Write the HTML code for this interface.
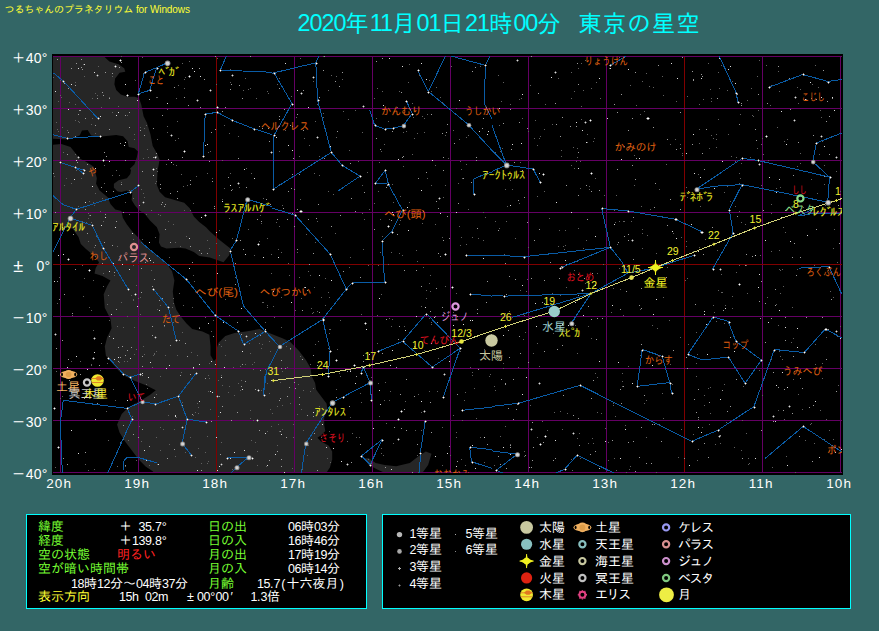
<!DOCTYPE html>
<html lang="ja"><head><meta charset="utf-8"><title>東京の星空</title>
<style>
html,body{margin:0;padding:0}
body{width:879px;height:631px;background:#336666;position:relative;overflow:hidden;font-family:"Liberation Sans","IPAGothic",sans-serif}
.hd{position:absolute;left:4.5px;top:4px;font-size:10px;line-height:12px;color:#ffff33;white-space:nowrap;letter-spacing:-0.1px}
.tt{position:absolute;left:297.5px;top:9.5px;font-size:23.5px;line-height:28px;color:#0ff;white-space:nowrap;letter-spacing:1px}
.tt b{font-weight:normal;font-size:23.4px;letter-spacing:-1.05px;position:relative;top:-1px}
.ax{position:absolute;color:#fff;font-size:14px;line-height:16px;white-space:nowrap;letter-spacing:0.2px}
.t b{display:inline-block;width:6.5px;text-align:center;font-weight:normal;font-size:12.5px}
.box{position:absolute;background:#000;border:1px solid #00ffff;box-sizing:border-box}
.t{position:absolute;font-size:13px;line-height:14px;white-space:nowrap;color:#fff}
.k{letter-spacing:-1.4px}.g{color:#77ff33}.y{color:#ffff33}.r{color:#ff2222}
svg{position:absolute;left:0;top:0}
svg text{font-family:"Liberation Sans","IPAGothic",sans-serif}
</style></head><body>
<div class="hd">つるちゃんのプラネタリウム for Windows</div>
<div class="tt"><b>2020</b>年<b>11</b>月<b>01</b>日<b>21</b>時<b>00</b>分<b style="margin-right:5.6px">&nbsp;&nbsp;</b>東京の星空</div>

<div class="ax" style="left:11.4px;top:49.7px;font-size:14px;letter-spacing:0">＋</div>
<div class="ax" style="left:0;top:49.7px;width:47.6px;text-align:right">40°</div>
<div class="ax" style="left:11.4px;top:101.7px;font-size:14px;letter-spacing:0">＋</div>
<div class="ax" style="left:0;top:101.7px;width:47.6px;text-align:right">30°</div>
<div class="ax" style="left:11.4px;top:153.7px;font-size:14px;letter-spacing:0">＋</div>
<div class="ax" style="left:0;top:153.7px;width:47.6px;text-align:right">20°</div>
<div class="ax" style="left:11.4px;top:205.7px;font-size:14px;letter-spacing:0">＋</div>
<div class="ax" style="left:0;top:205.7px;width:47.6px;text-align:right">10°</div>
<div class="ax" style="left:13.2px;top:257.8px;font-size:18px;letter-spacing:0">±</div>
<div class="ax" style="left:0;top:257.7px;width:50.2px;text-align:right">0°</div>
<div class="ax" style="left:11.4px;top:309.7px;font-size:14px;letter-spacing:0">－</div>
<div class="ax" style="left:0;top:309.7px;width:47.6px;text-align:right">10°</div>
<div class="ax" style="left:11.4px;top:361.7px;font-size:14px;letter-spacing:0">－</div>
<div class="ax" style="left:0;top:361.7px;width:47.6px;text-align:right">20°</div>
<div class="ax" style="left:11.4px;top:413.7px;font-size:14px;letter-spacing:0">－</div>
<div class="ax" style="left:0;top:413.7px;width:47.6px;text-align:right">30°</div>
<div class="ax" style="left:11.4px;top:465.7px;font-size:14px;letter-spacing:0">－</div>
<div class="ax" style="left:0;top:465.7px;width:47.6px;text-align:right">40°</div>
<div class="ax" style="left:39.2px;top:476.4px;width:40px;text-align:center;font-size:13.5px;letter-spacing:1.2px">20h</div>
<div class="ax" style="left:117.2px;top:476.4px;width:40px;text-align:center;font-size:13.5px;letter-spacing:1.2px">19h</div>
<div class="ax" style="left:195.2px;top:476.4px;width:40px;text-align:center;font-size:13.5px;letter-spacing:1.2px">18h</div>
<div class="ax" style="left:273.2px;top:476.4px;width:40px;text-align:center;font-size:13.5px;letter-spacing:1.2px">17h</div>
<div class="ax" style="left:351.2px;top:476.4px;width:40px;text-align:center;font-size:13.5px;letter-spacing:1.2px">16h</div>
<div class="ax" style="left:429.2px;top:476.4px;width:40px;text-align:center;font-size:13.5px;letter-spacing:1.2px">15h</div>
<div class="ax" style="left:507.2px;top:476.4px;width:40px;text-align:center;font-size:13.5px;letter-spacing:1.2px">14h</div>
<div class="ax" style="left:585.2px;top:476.4px;width:40px;text-align:center;font-size:13.5px;letter-spacing:1.2px">13h</div>
<div class="ax" style="left:663.2px;top:476.4px;width:40px;text-align:center;font-size:13.5px;letter-spacing:1.2px">12h</div>
<div class="ax" style="left:741.2px;top:476.4px;width:40px;text-align:center;font-size:13.5px;letter-spacing:1.2px">11h</div>
<div class="ax" style="left:819.2px;top:476.4px;width:40px;text-align:center;font-size:13.5px;letter-spacing:1.2px">10h</div>
<svg width="879" height="631" viewBox="0 0 879 631">
<defs><clipPath id="cp"><rect x="53" y="56" width="789" height="417"/></clipPath></defs>
<rect x="52" y="54" width="791" height="421" fill="#000"/>
<g clip-path="url(#cp)">
<path d="M52,54 L101.4,54 L109.4,61.4 L118.5,64.2 L124.2,68.3 L125.3,71.7 L119.6,72.8 L115.1,78.5 L114.4,84.2 L116.2,90 L120.8,94.5 L127.6,96.8 L134.5,96.8 L139,98 L141.3,104.8 L143.6,116.2 L147,123 L150.5,134.5 L152.7,145.9 L157.3,153.9 L159.6,159.6 L158.4,166.5 L157.6,170 L156.9,185 L159.6,191.8 L165.1,197.3 L174.6,200 L184.2,202.8 L189.7,208.2 L193.8,216.4 L199.2,221.9 L206,227.3 L210,231.4 L219,239.4 L230.4,248.5 L229.2,255.3 L223.5,262.2 L209.8,257.6 L199.2,256 L193.8,251.9 L185.6,248.5 L178.7,247.8 L166.5,248.5 L161,246.5 L158.9,242.4 L159.6,234.2 L156.9,227.3 L150,220.5 L144.6,213.7 L139.1,210.3 L135,205.5 L131.6,200 L132.3,193.2 L126.9,190.5 L121.4,192.1 L117.3,191.2 L113.9,187.7 L113.9,183.7 L118.7,180.2 L126.9,178.2 L130.3,174.1 L131,170 L129.9,168.7 L134.5,164.2 L136.8,157.3 L137.9,151.6 L134.5,148.2 L128.8,147 L127.6,141.3 L123.1,136.3 L116.2,134.9 L99.1,136.8 L91.1,135.6 L87.7,129.9 L82,130.4 L79.7,135.6 L68.3,139.5 L52,138.6 L52,144.7 L61.4,144 L70.5,147 L75.1,152.7 L79.7,158.4 L86.5,161.9 L93.4,166.4 L94.8,170 L96.8,178.2 L96.1,183.7 L99.6,190.5 L107.7,197.3 L110.5,204.1 L115.3,209.6 L121.4,211 L122.8,217.8 L126.9,224.6 L132.3,231.4 L137.8,236.9 L145.9,246.2 L157.3,255.3 L166.4,263.3 L172.1,271.3 L174.4,280.5 L172.8,291.4 L174,302.8 L176.3,309.7 L180.8,316.5 L186.5,323.4 L192.2,329.1 L202.5,331.4 L209.4,334.8 L210.5,346.2 L210.5,355.3 L213.9,361 L216.2,358.8 L216.7,348.5 L218.5,342.8 L225.3,335.9 L234.5,333 L245.9,331.4 L259.6,329.1 L271,333.7 L282.4,338.2 L290,341.8 L299.1,351 L305.9,360.1 L310.5,368.1 L311.6,376.1 L315.1,382.9 L316.2,389.8 L323.1,398.9 L326.5,403.5 L327.6,410.3 L324.2,417.2 L324.2,425.2 L325.3,430.9 L320.8,435.5 L317.4,437.7 L320.8,441.2 L328.8,445.7 L332.2,451.4 L332.2,459.4 L329.9,467.4 L324.2,476 L157,476 L152.4,471 L145.6,466.5 L138.7,459.6 L131.9,450.5 L125.1,441.4 L119.4,432.3 L117.1,424.4 L121.7,414.1 L128.5,407.3 L141,400.5 L150.1,394.8 L155.8,390.2 L145.9,385.3 L134.5,380.8 L125.3,376.2 L118.5,370.5 L111.6,362.5 L105.9,355.7 L104.8,346.5 L107.1,337.4 L111.6,328.3 L110.5,319.1 L105.9,310 L104.8,307.9 L103.7,294.2 L107.1,286.2 L110.5,280.5 L102.5,275.9 L94.5,273.6 L95.7,267.9 L99.1,262.2 L93.4,255.3 L85.4,248.5 L80.8,243.9 L78.5,237.1 L72.8,229.1 L60.3,224.5 L52,223.4Z" fill="#262626"/>
<path d="M364.2,458.3 L368.7,465.1 L377.9,469.7 L391.6,476 L420.1,476 L428.1,465.1 L431.5,453.7 L425.8,451.4 L418.9,456 L409.8,462.9 L396.1,466.3 L384.7,465.1 L375.6,462.9 L368.7,458.3Z" fill="#262626"/>
<line x1="60.5" y1="54" x2="60.5" y2="475" stroke="#640064" stroke-width="1"/>
<line x1="138.5" y1="54" x2="138.5" y2="475" stroke="#640064" stroke-width="1"/>
<line x1="216.5" y1="54" x2="216.5" y2="475" stroke="#800000" stroke-width="1"/>
<line x1="294.5" y1="54" x2="294.5" y2="475" stroke="#640064" stroke-width="1"/>
<line x1="372.5" y1="54" x2="372.5" y2="475" stroke="#640064" stroke-width="1"/>
<line x1="450.5" y1="54" x2="450.5" y2="475" stroke="#640064" stroke-width="1"/>
<line x1="528.5" y1="54" x2="528.5" y2="475" stroke="#640064" stroke-width="1"/>
<line x1="606.5" y1="54" x2="606.5" y2="475" stroke="#640064" stroke-width="1"/>
<line x1="684.5" y1="54" x2="684.5" y2="475" stroke="#800000" stroke-width="1"/>
<line x1="762.5" y1="54" x2="762.5" y2="475" stroke="#640064" stroke-width="1"/>
<line x1="840.5" y1="54" x2="840.5" y2="475" stroke="#640064" stroke-width="1"/>
<line x1="52" y1="56.5" x2="844" y2="56.5" stroke="#640064" stroke-width="1"/>
<line x1="52" y1="108.5" x2="844" y2="108.5" stroke="#640064" stroke-width="1"/>
<line x1="52" y1="160.5" x2="844" y2="160.5" stroke="#640064" stroke-width="1"/>
<line x1="52" y1="212.5" x2="844" y2="212.5" stroke="#640064" stroke-width="1"/>
<line x1="52" y1="264.5" x2="844" y2="264.5" stroke="#800000" stroke-width="1"/>
<line x1="52" y1="316.5" x2="844" y2="316.5" stroke="#640064" stroke-width="1"/>
<line x1="52" y1="368.5" x2="844" y2="368.5" stroke="#640064" stroke-width="1"/>
<line x1="52" y1="420.5" x2="844" y2="420.5" stroke="#640064" stroke-width="1"/>
<line x1="52" y1="472.5" x2="844" y2="472.5" stroke="#640064" stroke-width="1"/>
<path d="M649,86h1M279,78h1M626,472h1M630,85h1M597,273h1M136,349h1M559,230h1M127,115h1M221,442h1M329,297h1M644,403h1M172,307h1M193,275h1M478,238h1M207,173h1M57,129h1M749,463h1M456,108h1M248,89h1M157,55h1M265,369h1M552,293h1M609,68h1M711,101h1M281,327h1M157,171h1M711,98h1M450,455h1M235,277h1M139,426h1M663,297h1M592,438h1M240,366h1M336,76h1M506,221h1M577,157h1M318,341h1M740,178h1M218,416h1M620,289h1M392,319h1M331,75h1M144,197h1M757,148h1M319,97h1M323,117h1M619,268h1M185,77h1M509,311h1M71,183h1M408,82h1M693,434h1M443,314h1M301,409h1M88,213h1M138,298h1M58,101h1M144,128h1M95,256h1M652,325h1M786,456h1M386,423h1M794,371h1M84,76h1M72,375h1M323,56h1M591,88h1M129,190h1M718,290h1M100,370h1M189,61h1M350,417h1M140,297h1M268,93h1M589,189h1M168,415h1M468,209h1M253,420h1M119,256h1M102,198h1M730,201h1M325,278h1M135,80h1M175,140h1M565,470h1M393,443h1M337,349h1M75,120h1M779,446h1M307,455h1M521,98h1M181,174h1M301,298h1M82,265h1M75,154h1M743,386h1M736,272h1M483,240h1M352,433h1M251,173h1M355,110h1M110,359h1M134,139h1M435,224h1M133,198h1M442,237h1M94,247h1M117,466h1M818,87h1M321,437h1M310,275h1M663,95h1M718,72h1M151,270h1M293,437h1M319,156h1M458,183h1M722,292h1M94,205h1M663,418h1M388,264h1M560,335h1M254,255h1M59,277h1M426,290h1M682,155h1M795,472h1M429,283h1M56,371h1M236,469h1M505,313h1M804,215h1M108,440h1M802,409h1M681,195h1M313,312h1M659,189h1M466,137h1M323,113h1M456,432h1M803,55h1M350,370h1M75,82h1M650,209h1M669,320h1M53,77h1M216,84h1M680,337h1M680,144h1M542,421h1M500,436h1M92,118h1M820,410h1M140,314h1M319,175h1M762,395h1M368,459h1M167,109h1M198,413h1M826,419h1M88,470h1M822,378h1M342,79h1M381,448h1M84,278h1M833,439h1M580,188h1M272,413h1M160,376h1M491,334h1M698,174h1M587,134h1M527,279h1M157,139h1M803,207h1M461,459h1M700,206h1M811,179h1M640,355h1M710,413h1M238,383h1M770,105h1M462,420h1M240,390h1M520,162h1M681,237h1M185,452h1M718,119h1M55,467h1M303,390h1M631,221h1M267,91h1M156,351h1M292,150h1M614,458h1M740,114h1M381,294h1M705,239h1M591,338h1M261,390h1M173,224h1M703,99h1M793,338h1M103,259h1M59,78h1M539,366h1M156,394h1M195,457h1M780,187h1M88,218h1M484,349h1M728,134h1M157,97h1M208,375h1M177,121h1M313,81h1M201,463h1M713,138h1M292,468h1M613,405h1M600,98h1M460,351h1M424,350h1M558,246h1M340,320h1M262,344h1M187,185h1M293,424h1M715,444h1M658,280h1M180,246h1M686,246h1M510,104h1M400,220h1M279,431h1M783,286h1M224,188h1M269,341h1M259,241h1M349,267h1M708,63h1M498,75h1M254,362h1M109,320h1M433,349h1M585,283h1M381,453h1M163,429h1M578,68h1M282,371h1M158,214h1M83,64h1M71,361h1M297,414h1M412,103h1M179,293h1M468,125h1M285,130h1M459,139h1M630,466h1M308,271h1M164,326h1M696,332h1M155,183h1M93,202h1M657,328h1M806,99h1M518,367h1M448,158h1M614,210h1M279,151h1M414,138h1M623,221h1M673,233h1M746,433h1M814,443h1M837,336h1M339,373h1M564,249h1M642,248h1M315,344h1M687,278h1M419,75h1M210,151h1M129,214h1M574,270h1M576,161h1M619,57h1M153,355h1M213,320h1M154,353h1M249,285h1M503,82h1M311,308h1M350,257h1M719,88h1M212,178h1M329,333h1M216,243h1M776,188h1M821,117h1M329,431h1M726,422h1M381,151h1M250,88h1M348,119h1M417,261h1M696,376h1M748,464h1M255,442h1M371,377h1M286,346h1M642,233h1M379,162h1M456,437h1M768,160h1M183,305h1M772,467h1M776,304h1M300,58h1M709,234h1M777,127h1M837,262h1M771,213h1M385,282h1M225,340h1M713,305h1M146,384h1M681,429h1M617,244h1M112,76h1M104,165h1M198,407h1M194,281h1M93,280h1M678,457h1M780,270h1M62,396h1M634,155h1M582,290h1M687,96h1M745,224h1M637,270h1M404,326h1M246,168h1M433,339h1M595,178h1M279,184h1M739,183h1M249,343h1M101,245h1M771,359h1M176,417h1M259,343h1M64,185h1M615,222h1M250,410h1M403,132h1M85,464h1M540,136h1M287,367h1M422,223h1M699,129h1M321,237h1M195,412h1M257,451h1M197,403h1M834,229h1M383,455h1M302,469h1M60,398h1M225,355h1M134,354h1M647,235h1M549,218h1M221,375h1M642,229h1M330,329h1M377,343h1M419,471h1M686,187h1M615,416h1M588,326h1M424,132h1M178,85h1M239,187h1M464,400h1M437,391h1M840,191h1M57,303h1M270,351h1M267,431h1M502,148h1M167,132h1M362,132h1M822,141h1M459,226h1M91,124h1M290,349h1M160,427h1M377,88h1M552,124h1M282,405h1M282,429h1M328,90h1M757,76h1M485,217h1M299,156h1M624,221h1M537,437h1M403,358h1M697,460h1M382,91h1M321,297h1M120,442h1M593,141h1M229,133h1M708,388h1M418,394h1M258,55h1M235,211h1M501,101h1M143,158h1M494,386h1M297,252h1M261,223h1M526,291h1M537,145h1M739,173h1M157,309h1M824,165h1M750,157h1M247,320h1M604,195h1M445,185h1M442,465h1M725,305h1M732,81h1M126,471h1M791,342h1M819,205h1M581,106h1M727,186h1M379,416h1M317,221h1M86,222h1M528,131h1M413,117h1M724,323h1M409,64h1M148,157h1M836,171h1M208,391h1M798,394h1M329,329h1M304,138h1M315,242h1M176,98h1M127,361h1M761,144h1M830,291h1M378,265h1M207,463h1M277,406h1M121,56h1M822,363h1M147,388h1M741,450h1M359,437h1M456,293h1M143,193h1M176,165h1M207,240h1M571,459h1M219,255h1M805,440h1M824,184h1M437,322h1M752,115h1M340,376h1M380,252h1M739,265h1M424,422h1M597,412h1M222,385h1M793,379h1M199,327h1M751,88h1M466,164h1M748,458h1M717,250h1M670,364h1M133,239h1M93,330h1M282,205h1M391,326h1M230,69h1M436,87h1M144,354h1M452,317h1M390,391h1M248,229h1M222,199h1M581,63h1M356,437h1M810,424h1M709,424h1M310,391h1M250,418h1M166,164h1M261,348h1M416,250h1M704,405h1M108,295h1M257,465h1M622,381h1M95,133h1M594,138h1M575,457h1M622,386h1M132,416h1M572,470h1M362,213h1M60,95h1M666,164h1M470,367h1M829,430h1M494,465h1M82,221h1M824,439h1M74,229h1M418,472h1M134,327h1M89,215h1M596,82h1M347,441h1M233,367h1M267,383h1M724,384h1M124,361h1M800,89h1M792,307h1M798,103h1M63,152h1M545,104h1M313,388h1M186,236h1M277,445h1M427,178h1M60,80h1M83,296h1M523,339h1M173,303h1M230,173h1M574,168h1M587,142h1M156,97h1M524,456h1M263,198h1M64,376h1M429,391h1M136,285h1M89,201h1M120,260h1M741,163h1M191,352h1M207,436h1M125,202h1M431,322h1M761,185h1M589,186h1M812,84h1M741,222h1M716,147h1M265,332h1M190,437h1M732,308h1M280,382h1M533,353h1M119,362h1M734,447h1M480,437h1M109,97h1M106,411h1M210,409h1M371,463h1M208,152h1M732,296h1M250,353h1M317,311h1M682,153h1M371,394h1M116,170h1M103,221h1M175,456h1M586,240h1M727,90h1M782,269h1M519,99h1M530,405h1M123,439h1M424,118h1M811,423h1M819,154h1M578,228h1M91,222h1M378,191h1M343,111h1M312,313h1M783,227h1M229,218h1M613,288h1M118,106h1M431,91h1M371,465h1M583,90h1M147,149h1M580,458h1M815,364h1M389,318h1M784,419h1M209,378h1M757,187h1M274,317h1M787,139h1M314,173h1M670,144h1M782,359h1M472,237h1M218,380h1M140,127h1M376,118h1M537,196h1M771,251h1M415,430h1M760,255h1M698,419h1M544,280h1M385,382h1M393,202h1M277,84h1M92,98h1M778,410h1M422,116h1M208,461h1M595,373h1M445,135h1M423,267h1M442,427h1M378,383h1M505,426h1M89,307h1M767,297h1M107,363h1M571,72h1M136,460h1M281,297h1M721,292h1M753,116h1M224,125h1M219,230h1M167,126h1M391,252h1M522,118h1M245,364h1M653,87h1M103,273h1M780,356h1M384,400h1M817,193h1M490,374h1M431,185h1M196,176h1M656,253h1M103,286h1M91,364h1M510,180h1M495,221h1M101,107h1M156,156h1M629,469h1M656,472h1M121,302h1M336,137h1M56,122h1M442,102h1M96,236h1M262,302h1M687,197h1M608,247h1M778,71h1M515,238h1M141,441h1M495,390h1M739,211h1M709,148h1M115,400h1M230,82h1M169,444h1M182,402h1M646,400h1M462,178h1M146,214h1M270,409h1M519,203h1M575,325h1M389,400h1M480,66h1M731,156h1M436,472h1M561,334h1M228,392h1M374,203h1M547,430h1M369,209h1M280,398h1M113,389h1M260,215h1M79,122h1M771,204h1M503,363h1M528,247h1M430,291h1M468,135h1M241,296h1M414,347h1M335,233h1M438,358h1M362,185h1M500,151h1M229,315h1M714,312h1M838,385h1M229,386h1M711,135h1M616,470h1M141,189h1M820,110h1M76,170h1M474,388h1M577,438h1M840,326h1M269,393h1M623,315h1M430,275h1M184,79h1M710,89h1M173,322h1M165,355h1M512,189h1M504,254h1M209,363h1M296,117h1M157,464h1M361,314h1M252,364h1M193,203h1M101,343h1M112,112h1M349,150h1M616,195h1M149,465h1M377,315h1M299,277h1M759,370h1M360,393h1M710,387h1M465,392h1M327,458h1M397,107h1M278,249h1M699,247h1M779,269h1M211,331h1M565,245h1M589,283h1M232,469h1M699,143h1M814,265h1M91,365h1M279,226h1M554,412h1M154,354h1M472,372h1M562,429h1M306,234h1M702,427h1M67,130h1M771,85h1M716,139h1M156,181h1M330,462h1M178,138h1M613,403h1M190,210h1M523,314h1M176,165h1M367,172h1M317,104h1M388,121h1M310,364h1M766,65h1M747,293h1M128,440h1M472,375h1M173,164h1M363,249h1M567,413h1M495,152h1M368,265h1M476,418h1M271,273h1M510,444h1M91,310h1M295,310h1M603,264h1M619,221h1M97,95h1M238,136h1M785,232h1M358,161h1M440,97h1M698,449h1M267,305h1M276,222h1M75,104h1M800,153h1M151,210h1M427,114h1M573,147h1M628,147h1M563,246h1M245,78h1M205,317h1M699,104h1M133,300h1M460,161h1M611,312h1M524,451h1M625,425h1M133,265h1M693,251h1M405,401h1M797,87h1M182,63h1M662,393h1M82,265h1M95,193h1M704,395h1M192,307h1M577,261h1M636,105h1M577,148h1M69,102h1M800,163h1M266,466h1M174,429h1M716,321h1M724,192h1M828,270h1M489,376h1M453,130h1M676,101h1M169,257h1M175,242h1M112,175h1M177,355h1M403,166h1M503,368h1M565,230h1M675,139h1M271,426h1M309,145h1M421,412h1M243,90h1M815,344h1M98,66h1M697,354h1M553,333h1M100,211h1M417,455h1M156,437h1M672,384h1M333,194h1M499,228h1M644,111h1M429,318h1M797,269h1M184,210h1M758,110h1M466,244h1M634,185h1M389,219h1M484,462h1M520,290h1M364,219h1M763,154h1M94,469h1M54,176h1M209,248h1M593,443h1M290,403h1M88,241h1M460,245h1M558,78h1M143,346h1M797,166h1M179,315h1M182,332h1M735,161h1M784,141h1M399,224h1M525,332h1M435,165h1M392,184h1M779,250h1M78,206h1M429,80h1M778,325h1M399,91h1M256,98h1M80,361h1M114,275h1M300,356h1M168,221h1M539,138h1M561,150h1M759,473h1M173,298h1M646,73h1M267,238h1M322,158h1M197,355h1M742,420h1M597,377h1M842,465h1M61,97h1M402,255h1M561,156h1M288,263h1M181,372h1M688,344h1M406,131h1M530,85h1M608,460h1M217,58h1M319,406h1M291,96h1M263,302h1M566,287h1M696,363h1M443,197h1M640,114h1M267,307h1M131,295h1M160,450h1M656,270h1M762,138h1M221,346h1M289,275h1M779,91h1M560,411h1M534,138h1M160,305h1M399,253h1M380,219h1M58,131h1M630,279h1M155,237h1M133,299h1M640,309h1M544,191h1M104,183h1M298,384h1M577,353h1M62,127h1M571,165h1M160,215h1M583,248h1M581,119h1M646,437h1M833,297h1M759,60h1M232,189h1M628,366h1M253,369h1M156,168h1M348,183h1M461,237h1M669,381h1M315,121h1M281,252h1M361,402h1M505,189h1M107,304h1M382,236h1M72,315h1M308,445h1M445,286h1M747,100h1M328,292h1M685,280h1M198,448h1M421,306h1M605,428h1M483,212h1M205,452h1M265,322h1M535,120h1M780,293h1M574,91h1M300,199h1M608,442h1M325,305h1M400,196h1M271,254h1M431,324h1M579,433h1M624,146h1M545,435h1M232,238h1M123,327h1M336,389h1M571,98h1M193,415h1M465,465h1M412,154h1M721,274h1M426,298h1M117,246h1M184,88h1M78,121h1M499,125h1M95,93h1M716,134h1M134,134h1M588,443h1M453,415h1M779,351h1M833,248h1M736,157h1M219,344h1M451,66h1M641,206h1M66,178h1M143,73h1M746,265h1M421,430h1M152,367h1M544,129h1M461,169h1M409,202h1M222,160h1M417,133h1M384,144h1M585,60h1M117,326h1M342,294h1M815,65h1M225,299h1M251,440h1M374,98h1M119,175h1M278,424h1M142,239h1M659,424h1M127,316h1M686,241h1M328,191h1M560,295h1M622,373h1M125,466h1M507,206h1M314,287h1M183,186h1M142,57h1M642,81h1M370,391h1M720,443h1M328,348h1M241,380h1M81,178h1M121,182h1M537,343h1M179,315h1M146,125h1M662,76h1M735,206h1M580,161h1M826,337h1M524,315h1M273,306h1M303,430h1M601,413h1M667,267h1M453,312h1M234,395h1M825,205h1M721,65h1" stroke="#606060" stroke-width="1" fill="none" shape-rendering="crispEdges" transform="translate(0,0.5)"/>
<path d="M102,92h1M632,118h1M482,128h1M152,335h1M237,412h1M737,94h1M374,229h1M646,463h1M760,318h1M165,229h1M702,184h1M200,107h1M704,169h1M829,154h1M82,69h1M677,55h1M792,257h1M529,467h1M67,464h1M270,204h1M386,187h1M116,221h1M596,339h1M211,421h1M219,396h1M826,121h1M602,318h1M238,158h1M510,109h1M403,156h1M109,98h1M785,317h1M570,126h1M635,471h1M651,463h1M720,435h1M741,105h1M215,56h1M314,433h1M297,209h1M636,158h1M509,276h1M211,132h1M792,413h1M785,210h1M593,380h1M281,459h1M524,197h1M513,419h1M483,118h1M473,181h1M331,226h1M826,359h1M119,67h1M162,298h1M809,210h1M289,387h1M104,152h1M235,284h1M802,388h1M457,394h1M105,214h1M145,262h1M708,457h1M628,442h1M519,336h1M510,445h1M222,406h1M279,88h1M421,286h1M160,184h1M285,368h1M706,129h1M64,83h1M628,234h1M476,157h1M693,79h1M106,191h1M297,249h1M95,125h1M702,76h1M120,357h1M188,105h1M347,371h1M632,165h1M555,103h1M222,111h1M555,458h1M816,99h1M661,441h1M87,233h1M212,181h1M246,187h1M446,132h1M287,396h1M486,302h1M641,288h1M577,63h1M579,445h1M696,412h1M702,153h1M414,396h1M476,294h1M288,191h1M544,303h1M406,379h1M209,161h1M133,434h1M292,126h1M548,294h1M87,164h1M498,230h1M565,333h1M694,399h1M736,379h1M562,345h1M121,62h1M57,59h1M635,179h1M104,242h1M783,410h1M139,205h1M68,388h1M667,139h1M641,427h1M339,86h1M667,225h1M68,132h1M438,253h1M443,157h1M292,213h1M313,355h1M587,219h1M238,467h1M510,447h1M105,72h1M775,289h1M118,361h1M316,218h1M101,187h1M532,422h1M578,84h1M576,126h1M237,322h1M142,366h1M193,368h1M761,430h1M703,254h1M463,178h1M688,191h1M75,136h1M260,370h1M698,417h1M516,409h1M382,58h1M391,220h1M404,409h1M239,85h1M414,346h1M55,212h1M597,318h1M588,306h1M746,254h1M506,294h1M628,240h1M475,67h1M170,193h1M586,185h1M141,268h1M487,281h1M809,407h1M220,454h1M487,444h1M64,294h1M138,437h1M81,67h1M225,107h1M241,386h1M214,208h1M57,281h1M140,130h1M260,335h1M522,170h1M806,317h1M503,123h1M784,442h1M816,229h1M349,406h1M655,183h1M688,473h1M187,356h1M269,141h1M307,290h1M401,92h1M670,199h1M550,262h1M231,84h1M142,375h1M478,369h1M268,128h1M85,452h1M62,340h1M827,101h1M80,110h1M68,88h1M261,221h1M477,228h1M293,158h1M102,263h1M207,253h1M566,185h1M737,216h1M591,191h1M281,368h1M443,240h1M458,203h1M513,379h1M477,309h1M79,110h1M556,124h1M131,347h1M109,336h1M457,316h1M402,157h1M279,400h1M215,129h1M363,361h1M259,126h1M617,112h1M553,460h1M323,70h1M165,204h1M302,359h1M578,418h1M303,130h1M693,80h1M763,210h1M311,439h1M557,349h1M457,461h1M142,171h1M400,394h1M505,263h1M412,472h1M304,287h1M423,211h1M723,310h1M822,317h1M454,143h1M717,98h1M442,307h1M641,308h1M654,207h1M168,159h1M566,264h1M828,329h1M614,104h1M466,256h1M397,234h1M56,348h1M280,398h1M342,72h1M509,357h1M266,199h1M517,404h1M324,158h1M624,236h1M416,270h1M164,325h1M584,278h1M81,59h1M141,292h1M626,291h1M182,157h1M122,346h1M58,255h1M282,379h1M277,451h1M543,442h1M687,368h1M778,387h1M149,99h1M673,350h1M169,404h1M75,85h1M84,398h1M190,184h1M722,390h1M756,140h1M129,127h1M284,109h1M144,135h1M83,169h1M78,384h1M563,395h1M201,253h1M435,316h1M778,66h1M317,365h1M438,208h1M302,310h1M539,229h1M192,262h1M431,114h1M307,415h1M68,359h1M231,190h1M532,460h1M350,163h1M773,421h1M121,184h1M767,103h1M739,124h1M376,138h1M449,446h1M242,364h1M259,430h1M578,295h1M799,436h1M53,173h1M63,458h1M745,265h1M633,441h1M798,142h1M525,455h1M106,156h1M406,430h1M413,348h1M727,411h1M635,72h1M612,440h1M70,387h1M652,424h1M544,280h1M620,389h1M755,129h1M213,336h1M73,234h1M313,253h1M790,109h1M503,335h1M515,279h1M204,79h1M771,318h1M544,351h1M269,460h1M682,57h1M142,356h1M592,273h1M201,470h1M528,362h1M676,149h1M829,116h1M680,209h1M620,309h1M125,160h1M824,176h1M156,153h1M340,215h1M177,191h1M561,266h1M418,178h1M319,97h1M578,274h1M562,117h1M813,135h1M531,56h1M789,78h1M129,112h1M796,275h1M505,384h1M75,269h1M174,449h1M472,71h1M243,249h1M153,157h1M299,174h1M386,319h1M701,74h1M364,192h1M692,144h1M160,188h1M449,238h1M832,98h1M170,242h1M277,219h1M230,89h1M317,470h1M192,414h1M684,458h1M692,71h1M76,63h1M730,337h1M199,250h1M80,374h1M255,389h1M741,103h1M531,278h1M159,300h1M90,215h1M235,263h1M695,304h1M360,277h1M262,128h1M355,211h1M794,243h1M257,219h1M440,256h1M363,355h1M118,347h1M654,424h1M578,195h1M231,420h1M765,342h1M398,339h1M299,404h1M785,340h1M241,334h1M617,169h1M112,245h1M85,118h1M658,65h1M765,303h1M639,457h1M666,277h1M313,416h1M633,217h1M813,405h1M394,427h1M290,125h1M376,61h1M153,262h1M78,114h1M533,447h1M99,365h1M336,397h1M356,376h1M633,259h1M443,170h1M653,127h1M501,379h1M752,256h1M245,381h1M179,340h1M811,98h1M656,299h1M730,406h1M123,212h1M228,177h1M447,216h1M120,143h1M442,133h1M784,389h1M294,382h1M508,408h1M290,348h1M831,299h1M823,70h1M498,456h1M318,204h1M704,443h1M518,200h1M287,219h1M591,319h1M404,270h1M190,180h1M297,114h1M542,302h1M621,403h1M162,115h1M628,130h1M114,272h1M123,425h1M471,182h1M712,227h1M324,56h1M164,206h1M351,198h1M97,98h1M95,245h1M199,68h1M447,124h1M149,446h1M109,129h1M417,444h1M125,465h1M505,383h1M182,405h1M185,343h1M775,305h1M62,227h1M291,188h1M508,330h1M742,458h1M360,444h1M431,432h1M599,190h1M127,350h1M153,128h1M401,428h1M309,264h1M250,56h1M506,468h1M514,162h1M154,279h1M511,149h1M152,286h1M299,397h1M184,97h1M281,360h1M559,278h1M308,219h1M112,73h1M69,380h1M842,92h1M167,458h1M279,116h1M595,451h1M476,160h1M142,429h1M644,395h1M618,242h1M280,431h1M72,313h1M380,149h1M337,131h1M590,454h1M71,68h1M641,344h1M800,257h1M500,464h1M94,383h1M294,226h1M199,328h1M477,313h1M125,115h1M793,175h1M161,204h1M294,189h1M180,375h1M190,374h1M103,95h1M430,402h1M382,353h1M125,355h1M426,172h1M85,209h1M639,305h1M174,87h1M392,131h1M387,185h1M214,206h1M113,191h1M773,372h1M170,345h1M621,94h1M116,309h1M281,466h1M335,81h1M303,90h1M623,386h1M67,154h1M531,467h1M527,222h1M319,312h1M578,152h1M520,353h1M680,148h1M292,174h1M527,128h1M836,391h1M436,288h1M436,201h1M177,198h1M838,205h1M680,112h1M759,301h1M430,311h1M399,326h1M351,462h1M152,326h1M190,246h1M761,281h1M240,240h1M396,367h1M534,240h1M242,98h1M538,93h1M839,243h1M283,208h1M205,378h1M59,299h1M800,378h1M591,398h1M560,136h1M758,94h1M709,402h1M796,76h1M385,467h1M812,461h1M793,356h1M162,202h1M519,122h1M295,388h1M279,119h1M698,389h1M573,415h1M97,403h1M437,322h1M187,420h1M77,162h1M343,271h1M686,357h1M286,437h1" stroke="#9a9a9a" stroke-width="1" fill="none" shape-rendering="crispEdges" transform="translate(0,0.5)"/>
<path d="M149,242h1M431,367h1M810,82h1M76,160h1M672,231h1M398,159h1M522,394h1M208,323h1M628,69h1M599,468h1M768,322h1M149,258h1M118,112h1M71,430h1M725,308h1M571,212h1M522,94h1M435,456h1M568,325h1M453,325h1M244,169h1M242,389h1M217,273h1M189,268h1M539,173h1M459,100h1M555,440h1M782,372h1M192,68h1M556,202h1M288,145h1M707,354h1M755,458h1M355,383h1M216,437h1M536,326h1M257,473h1M241,308h1M150,260h1M472,320h1M63,254h1M276,137h1M129,269h1M463,324h1M284,472h1M224,367h1M677,78h1M391,469h1M575,302h1M90,270h1M632,383h1M779,310h1M447,453h1M369,354h1M197,470h1M175,416h1M92,186h1M113,338h1M201,217h1M199,401h1M472,445h1M74,179h1M582,130h1M483,258h1M701,78h1M94,72h1M114,359h1M576,122h1M834,110h1M565,260h1M503,447h1M840,338h1M278,257h1M98,136h1M234,452h1M835,452h1M652,365h1M211,361h1M706,324h1M693,134h1M755,255h1M142,373h1M434,317h1M392,350h1M341,461h1M797,347h1M759,274h1M254,178h1M405,330h1M210,391h1M205,145h1M779,179h1M271,380h1M380,404h1M701,432h1M595,236h1M132,233h1M614,224h1M656,299h1M350,371h1M95,419h1M686,153h1M265,329h1M122,264h1M267,465h1M487,134h1M510,205h1M621,159h1M797,328h1M68,109h1M562,324h1M219,466h1M448,382h1M671,63h1M456,212h1M807,235h1M691,224h1M71,84h1M610,68h1M586,142h1M421,190h1M475,468h1M421,401h1M735,83h1M535,303h1M379,298h1M217,470h1M720,399h1M787,387h1M769,177h1M55,91h1M166,368h1M841,449h1M470,320h1M319,275h1M333,448h1M223,322h1M222,201h1M175,415h1M285,63h1M479,131h1M499,108h1M130,358h1M137,100h1M207,144h1M578,168h1M510,454h1M85,202h1M815,401h1M440,213h1M199,364h1M109,161h1M54,281h1M144,450h1M148,377h1M824,146h1M676,238h1M291,302h1M612,305h1M137,306h1M832,97h1M653,314h1M169,365h1M432,160h1M698,251h1M431,343h1M765,240h1M255,333h1M639,158h1M730,66h1M189,238h1M95,168h1M125,84h1M154,397h1M242,351h1M212,392h1M819,457h1M416,316h1M540,182h1M722,161h1M551,77h1M331,280h1M425,307h1M124,145h1M758,287h1M805,99h1M216,232h1M618,362h1M275,454h1M698,427h1M273,291h1M704,311h1M488,131h1M87,369h1M245,254h1M393,214h1M263,257h1M714,188h1M84,64h1M109,271h1M392,212h1M728,69h1M599,78h1M512,144h1M94,352h1M383,105h1M305,287h1M230,185h1M407,207h1M153,175h1M694,173h1M265,433h1M111,314h1M159,310h1M313,412h1M292,150h1M775,421h1M734,351h1M366,329h1M426,79h1M221,377h1M390,365h1M620,458h1M408,230h1M308,107h1M625,429h1M719,58h1M704,314h1M389,58h1M449,361h1M76,356h1M522,285h1M785,327h1M786,144h1M193,367h1M150,362h1M526,377h1M67,367h1M78,453h1M484,437h1M326,447h1M146,460h1M607,118h1M521,143h1M379,390h1M118,357h1M787,465h1M776,192h1M125,142h1M330,146h1M171,162h1M220,412h1M322,424h1M105,217h1M821,97h1M281,434h1M101,225h1M167,103h1M297,90h1M599,361h1M78,68h1M776,385h1M230,458h1M215,364h1M402,66h1M790,241h1M503,335h1M113,263h1M127,400h1M194,71h1M244,450h1M116,115h1M689,465h1M605,441h1M200,76h1M373,428h1M700,177h1M781,111h1M456,466h1M583,315h1M595,285h1M781,217h1M421,63h1M158,464h1M100,116h1M115,227h1M58,255h1" stroke="#dcdcdc" stroke-width="1" fill="none" shape-rendering="crispEdges" transform="translate(0,0.5)"/>
<path d="M53.3,72.8 L63.3,81.0 L97.6,118.3M52.0,134.6 L67.0,138.3 L77.0,137.8 L99.6,136.1M60.3,162.4 L75.3,167.4 L84.5,170.4M75.3,167.4 L83.3,173.4M167.1,62.8 L156.6,67.8 L144.6,72.3 L138.3,94.0 L149.6,90.3 L156.6,67.8M227.2,54.0 L220.2,70.5 L242.2,71.0 L262.2,71.5 L272.0,72.8M203.4,156.1 L205.2,114.1 L217.2,112.3 L232.2,120.3 L253.5,128.6 L272.0,134.6M247.2,199.2 L272.0,206.7M272.0,73.5 L274.0,72.8 L315.8,62.8 L319.6,54.0M274.0,72.8 L292.0,103.6 L274.0,135.3 L273.3,189.2M315.8,62.8 L317.6,100.3 L331.3,152.4 L273.3,189.2M331.3,152.4 L342.1,165.4 L360.1,176.1 L337.6,191.2M369.6,109.6 L374.6,125.3 L384.6,129.1 L393.4,128.3 L403.4,125.6 L412.2,113.6 L406.4,101.1M417.7,70.3 L428.4,91.5 L446.4,54.0M428.4,91.5 L468.5,124.8 L492.0,150.4M448.5,55.3 L485.2,65.3 L491.0,54.0M485.2,65.3 L484.7,104.1 L492.0,119.1M385.1,170.4 L375.4,183.4 L388.4,184.1 L385.1,170.4M473.5,193.7 L473.5,179.1 L484.7,174.1 L492.0,172.1M492.0,125.3 L506.3,164.9M492.0,150.4 L506.3,164.9M492.0,171.6 L506.3,164.9 L533.3,169.1 L540.1,182.4M610.4,65.3 L629.7,54.0M718.3,54.0 L736.4,93.3 L737.6,101.6M768.9,87.3 L802.7,74.5 L828.2,81.5 L844.0,79.0M696.3,189.2 L742.1,158.4 L757.6,160.4 L829.5,177.1 L827.7,202.2M696.3,189.2 L715.1,186.2 L742.1,184.6 L777.7,191.7 L827.7,202.2M829.5,177.1 L812.7,161.6 L816.5,142.9 L844.0,132.1M742.1,184.6 L728.9,210.4M52.0,194.8 L63.3,204.8 L76.3,209.3 L129.6,192.3 L138.3,186.0M76.3,209.3 L70.0,218.0M70.0,218.0 L52.0,253.6M70.0,218.0 L92.0,225.3 L103.3,248.1 L128.3,289.1M140.9,242.3 L162.1,259.8 L186.4,279.4 L215.2,315.4 L238.5,331.2M247.2,199.0 L236.5,240.3 L230.2,250.6 L243.5,306.1 L265.2,331.2M153.4,289.1 L168.4,307.4 L176.4,340.4M272.0,208.0 L295.3,215.3 L330.1,254.1 L346.3,289.1 L322.6,319.2M346.3,289.1 L352.1,282.9 L384.6,282.4 L382.1,241.1 L391.6,231.6 L402.6,210.3 L388.4,184.2M466.5,255.3 L492.0,255.3M470.5,294.4 L479.7,294.9 L492.0,296.1M492.0,255.3 L524.5,256.6 L610.4,247.3M601.6,208.5 L610.4,247.3 L622.1,262.3 L627.9,273.1M601.6,208.5 L628.4,211.0 L675.5,219.3 L701.7,231.6M559.6,268.1 L610.4,247.3M492.0,295.4 L504.5,296.1 L590.9,293.6M512.0,317.4 L590.9,293.6 L627.9,273.1 L652.2,268.6 L694.2,255.3M571.3,323.2 L590.9,293.6M729.4,210.3 L733.1,233.1 L712.6,269.1M798.9,268.1 L829.0,266.6 L841.5,293.6M797.5,216.1 L814.6,213.2 L844.2,213.2M797.5,216.1 L813.5,209.2M108.3,357.5 L123.3,373.8 L130.3,377.1 L139.6,374.1M130.3,377.1 L142.1,401.6M142.1,401.6 L155.4,404.1 L178.4,396.3 L195.9,373.3M178.4,396.3 L187.2,419.1 L206.4,422.1M187.2,419.1 L182.1,443.4 L191.4,455.2M142.1,401.6 L127.1,408.4 L132.1,419.1 L105.8,477.2M127.1,408.4 L63.3,400.3 L60.3,422.1 L62.5,477.2M157.1,462.9 L139.6,457.9 L127.1,457.2 L123.3,461.7 L123.3,469.7M238.5,331.3 L243.5,344.5 L265.2,331.3M265.2,374.1 L263.5,394.6M227.2,457.7 L248.5,457.2M248.5,457.2 L236.5,467.2 L227.2,477.2M265.2,331.3 L279.5,346.5 L322.6,319.5 L330.1,350.8 L328.3,376.3M279.5,346.5 L266.5,371.3 L263.5,394.3M363.4,367.1 L370.1,382.6 L371.4,400.1M363.4,367.1 L360.9,373.3M370.1,382.6 L342.6,397.1 L332.1,402.6 L319.6,422.1 L305.8,443.4 L300.8,477.2M378.4,351.3 L402.6,341.3 L426.4,313.5 L460.2,348.3 L432.2,367.1 L402.6,341.3M460.2,348.3 L443.4,396.6M382.1,439.6 L361.4,455.9 L370.1,464.7 L382.1,439.6M425.2,420.9 L420.2,453.4 L419.7,477.2M461.5,410.4 L492.0,407.1M469.7,447.1 L471.5,461.7 L492.0,468.4M469.7,447.1 L492.0,449.7M492.0,406.4 L518.3,403.3 L580.1,385.3 L691.5,441.4M642.2,349.5 L662.2,356.3 L669.7,382.6 L637.2,386.3 L642.2,349.5M669.7,382.6 L671.7,393.3M492.0,450.9 L517.0,454.2 L496.5,470.2 L503.3,473.4M555.1,473.4 L564.6,469.2 L577.1,455.2 L614.6,473.4M571.3,323.3 L575.8,317.0M691.3,441.4 L717.6,430.4 L753.9,406.6 L774.4,349.5 L804.4,352.5 L825.2,329.0 L844.0,339.0M713.1,317.0 L687.6,354.5 L702.6,360.0 L728.4,357.0 L745.1,383.3 L761.4,360.0 L735.9,341.3 L728.1,321.3 L713.1,317.0M765.1,458.4 L803.2,426.4 L844.0,453.4" fill="none" stroke="#0a5ca6" stroke-width="1" shape-rendering="crispEdges"/>
<polyline points="273.3,380.6 322.5,374.5 369.6,365.3 416.7,354.5 461.5,341.5 505.5,326.4 554.3,311 590.9,293.6 631.6,277.6 655.5,267.5 672.6,260.5 713.8,244.3 754.6,228 795.8,213.2 836.4,200.5 844,197.8" fill="none" stroke="#d2d278" stroke-width="1" shape-rendering="crispEdges"/>
<path d="M271.8,380.6h3M273.3,379.1v3M321.0,374.5h3M322.5,373.0v3M368.1,365.3h3M369.6,363.8v3M415.2,354.5h3M416.7,353.0v3M504.0,326.4h3M505.5,324.9v3M589.4,293.6h3M590.9,292.1v3M671.1,260.5h3M672.6,259.0v3M712.3,244.3h3M713.8,242.8v3M753.1,228h3M754.6,226.5v3M794.3,213.2h3M795.8,211.7v3M834.9,200.5h3M836.4,199.0v3" stroke="#e8e840" stroke-width="1" fill="none"/>
<path d="M820,136.5h3M821.5,135v3M237,183.5h3M238.5,182v3M300,93.5h3M301.5,92v3M93,338.5h3M94.5,337v3M794,97.5h3M795.5,96v3M270,152.5h3M271.5,151v3M231,75.5h3M232.5,74v3M142,202.5h3M143.5,201v3M209,90.5h3M210.5,89v3M216,396.5h3M217.5,395v3M196,100.5h3M197.5,99v3M443,374.5h3M444.5,373v3M362,106.5h3M363.5,105v3M54,334.5h3M55.5,333v3M346,464.5h3M347.5,463v3M397,439.5h3M398.5,438v3M96,75.5h3M97.5,74v3M154,337.5h3M155.5,336v3M793,120.5h3M794.5,119v3M572,433.5h3M573.5,432v3M835,157.5h3M836.5,156v3M438,198.5h3M439.5,197v3M758,164.5h3M759.5,163v3M772,416.5h3M773.5,415v3M170,135.5h3M171.5,134v3M181,427.5h3M182.5,426v3M92,358.5h3M93.5,357v3M530,429.5h3M531.5,428v3M316,137.5h3M317.5,136v3M835,331.5h3M836.5,330v3M788,406.5h3M789.5,405v3M77,157.5h3M78.5,156v3M312,77.5h3M313.5,76v3M538,383.5h3M539.5,382v3M423,411.5h3M424.5,410v3M516,60.5h3M517.5,59v3M220,464.5h3M221.5,463v3M631,240.5h3M632.5,239v3M584,122.5h3M585.5,121v3M719,269.5h3M720.5,268v3M718,436.5h3M719.5,435v3M581,290.5h3M582.5,289v3M554,72.5h3M555.5,71v3M245,336.5h3M246.5,335v3M561,267.5h3M562.5,266v3" stroke="#606060" stroke-width="1" fill="none" shape-rendering="crispEdges"/>
<path d="M821,136h1M238,183h1M301,93h1M94,338h1M795,97h1M271,152h1M232,75h1M143,202h1M210,90h1M217,396h1M197,100h1M444,374h1M363,106h1M55,334h1M347,464h1M398,439h1M97,75h1M155,337h1M794,120h1M573,433h1M836,157h1M439,198h1M759,164h1M773,416h1M171,135h1M182,427h1M93,358h1M531,429h1M317,137h1M836,331h1M789,406h1M78,157h1M313,77h1M539,383h1M424,411h1M517,60h1M221,464h1M632,240h1M585,122h1M720,269h1M719,436h1M582,290h1M555,72h1M246,336h1M562,267h1" stroke="#ddd" stroke-width="1" fill="none" shape-rendering="crispEdges" transform="translate(0,0.5)"/>
<circle cx="167.6" cy="63.3" r="2.8" fill="#8c8c8c"/><circle cx="167.6" cy="63.3" r="1.9" fill="#d4d4d4"/>
<circle cx="247.7" cy="199.7" r="2.5" fill="#8c8c8c"/><circle cx="247.7" cy="199.7" r="1.6" fill="#d4d4d4"/>
<circle cx="403.9" cy="126.1" r="2.3" fill="#8c8c8c"/><circle cx="403.9" cy="126.1" r="1.4" fill="#d4d4d4"/>
<circle cx="469.0" cy="125.3" r="2.3" fill="#8c8c8c"/><circle cx="469.0" cy="125.3" r="1.4" fill="#d4d4d4"/>
<circle cx="506.8" cy="165.4" r="2.8" fill="#8c8c8c"/><circle cx="506.8" cy="165.4" r="1.9" fill="#d4d4d4"/>
<circle cx="697.0" cy="189.7" r="2.5" fill="#8c8c8c"/><circle cx="697.0" cy="189.7" r="1.6" fill="#d4d4d4"/>
<circle cx="813.2" cy="162.1" r="2.3" fill="#8c8c8c"/><circle cx="813.2" cy="162.1" r="1.4" fill="#d4d4d4"/>
<circle cx="828.2" cy="202.7" r="2.8" fill="#8c8c8c"/><circle cx="828.2" cy="202.7" r="1.9" fill="#d4d4d4"/>
<circle cx="70.5" cy="218.5" r="2.8" fill="#8c8c8c"/><circle cx="70.5" cy="218.5" r="1.9" fill="#d4d4d4"/>
<circle cx="571.8" cy="323.7" r="2.5" fill="#8c8c8c"/><circle cx="571.8" cy="323.7" r="1.6" fill="#d4d4d4"/>
<circle cx="142.6" cy="402.1" r="2.2" fill="#8c8c8c"/><circle cx="142.6" cy="402.1" r="1.3" fill="#d4d4d4"/>
<circle cx="182.6" cy="443.9" r="2.5" fill="#8c8c8c"/><circle cx="182.6" cy="443.9" r="1.6" fill="#d4d4d4"/>
<circle cx="249.0" cy="457.7" r="2.5" fill="#8c8c8c"/><circle cx="249.0" cy="457.7" r="1.6" fill="#d4d4d4"/>
<circle cx="237.0" cy="467.7" r="2.5" fill="#8c8c8c"/><circle cx="237.0" cy="467.7" r="1.6" fill="#d4d4d4"/>
<circle cx="332.6" cy="403.1" r="2.8" fill="#8c8c8c"/><circle cx="332.6" cy="403.1" r="1.9" fill="#d4d4d4"/>
<circle cx="370.6" cy="383.1" r="2.5" fill="#8c8c8c"/><circle cx="370.6" cy="383.1" r="1.6" fill="#d4d4d4"/>
<circle cx="280.0" cy="347.0" r="2.3" fill="#8c8c8c"/><circle cx="280.0" cy="347.0" r="1.4" fill="#d4d4d4"/>
<circle cx="306.3" cy="443.9" r="2.3" fill="#8c8c8c"/><circle cx="306.3" cy="443.9" r="1.4" fill="#d4d4d4"/>
<circle cx="517.5" cy="454.7" r="2.5" fill="#8c8c8c"/><circle cx="517.5" cy="454.7" r="1.6" fill="#d4d4d4"/>
<path d="M119,60.5h3M120.5,59v3M114,66.5h3M115.5,65v3M62,81.5h3M63.5,80v3M97,118.5h3M98.5,117v3M99,136.5h3M100.5,135v3M66,138.5h3M67.5,137v3M59,162.5h3M60.5,161v3M74,167.5h3M75.5,166v3M83,170.5h3M84.5,169v3M82,173.5h3M83.5,172v3M144,72.5h3M145.5,71v3M156,68.5h3M157.5,67v3M137,94.5h3M138.5,93v3M149,90.5h3M150.5,89v3M188,76.5h3M189.5,75v3M126,95.5h3M127.5,94v3M183,151.5h3M184.5,150v3M154,157.5h3M155.5,156v3M152,169.5h3M153.5,168v3M137,185.5h3M138.5,184v3M129,192.5h3M130.5,191v3M75,209.5h3M76.5,208v3M216,107.5h3M217.5,106v3M216,112.5h3M217.5,111v3M204,114.5h3M205.5,113v3M231,120.5h3M232.5,119v3M253,129.5h3M254.5,128v3M202,156.5h3M203.5,155v3M219,70.5h3M220.5,69v3M102,160.5h3M103.5,159v3M273,73.5h3M274.5,72v3M315,63.5h3M316.5,62v3M291,104.5h3M292.5,103v3M317,100.5h3M318.5,99v3M330,152.5h3M331.5,151v3M273,135.5h3M274.5,134v3M272,189.5h3M273.5,188v3M341,165.5h3M342.5,164v3M359,176.5h3M360.5,175v3M374,125.5h3M375.5,124v3M384,129.5h3M385.5,128v3M392,128.5h3M393.5,127v3M411,114.5h3M412.5,113v3M405,101.5h3M406.5,100v3M417,70.5h3M418.5,69v3M427,92.5h3M428.5,91v3M484,65.5h3M485.5,64v3M384,170.5h3M385.5,169v3M374,183.5h3M375.5,182v3M387,184.5h3M388.5,183v3M473,194.5h3M474.5,193v3M300,211.5h3M301.5,210v3M609,65.5h3M610.5,64v3M589,120.5h3M590.5,119v3M646,118.5h3M647.5,117v3M532,169.5h3M533.5,168v3M539,182.5h3M540.5,181v3M542,174.5h3M543.5,173v3M590,173.5h3M591.5,172v3M601,208.5h3M602.5,207v3M735,93.5h3M736.5,92v3M737,102.5h3M738.5,101v3M768,87.5h3M769.5,86v3M802,74.5h3M803.5,73v3M827,82.5h3M828.5,81v3M741,158.5h3M742.5,157v3M757,160.5h3M758.5,159v3M829,177.5h3M830.5,176v3M815,143.5h3M816.5,142v3M741,185.5h3M742.5,184v3M765,136.5h3M766.5,135v3M647,118.5h3M648.5,117v3M728,210.5h3M729.5,209v3M75,209.5h3M76.5,208v3M91,225.5h3M92.5,224v3M102,248.5h3M103.5,247v3M127,289.5h3M128.5,288v3M134,294.5h3M135.5,293v3M129,192.5h3M130.5,191v3M185,279.5h3M186.5,278v3M214,315.5h3M215.5,314v3M237,331.5h3M238.5,330v3M264,331.5h3M265.5,330v3M235,240.5h3M236.5,239v3M229,251.5h3M230.5,250v3M152,289.5h3M153.5,288v3M167,307.5h3M168.5,306v3M67,259.5h3M68.5,258v3M88,270.5h3M89.5,269v3M204,215.5h3M205.5,214v3M257,244.5h3M258.5,243v3M294,215.5h3M295.5,214v3M299,211.5h3M300.5,210v3M329,254.5h3M330.5,253v3M345,289.5h3M346.5,288v3M351,283.5h3M352.5,282v3M384,282.5h3M385.5,281v3M381,241.5h3M382.5,240v3M391,232.5h3M392.5,231v3M387,226.5h3M388.5,225v3M402,210.5h3M403.5,209v3M322,319.5h3M323.5,318v3M444,254.5h3M445.5,253v3M465,255.5h3M466.5,254v3M469,294.5h3M470.5,293v3M451,287.5h3M452.5,286v3M364,323.5h3M365.5,322v3M473,194.5h3M474.5,193v3M601,208.5h3M602.5,207v3M609,247.5h3M610.5,246v3M559,268.5h3M560.5,267v3M523,257.5h3M524.5,256v3M627,211.5h3M628.5,210v3M675,219.5h3M676.5,218v3M701,232.5h3M702.5,231v3M693,255.5h3M694.5,254v3M503,296.5h3M504.5,295v3M728,210.5h3M729.5,209v3M732,233.5h3M733.5,232v3M712,269.5h3M713.5,268v3M674,219.5h3M675.5,218v3M700,232.5h3M701.5,231v3M738,284.5h3M739.5,283v3M828,267.5h3M829.5,266v3M825,329.5h3M826.5,328v3M712,317.5h3M713.5,316v3M728,322.5h3M729.5,321v3M107,358.5h3M108.5,357v3M122,374.5h3M123.5,373v3M129,377.5h3M130.5,376v3M139,374.5h3M140.5,373v3M154,404.5h3M155.5,403v3M177,396.5h3M178.5,395v3M195,373.5h3M196.5,372v3M186,419.5h3M187.5,418v3M205,422.5h3M206.5,421v3M190,455.5h3M191.5,454v3M126,408.5h3M127.5,407v3M131,419.5h3M132.5,418v3M237,331.5h3M238.5,330v3M243,344.5h3M244.5,343v3M264,331.5h3M265.5,330v3M263,395.5h3M264.5,394v3M226,458.5h3M227.5,457v3M251,458.5h3M252.5,457v3M175,340.5h3M176.5,339v3M256,420.5h3M257.5,419v3M257,390.5h3M258.5,389v3M53,408.5h3M54.5,407v3M57,447.5h3M58.5,446v3M322,320.5h3M323.5,319v3M329,351.5h3M330.5,350v3M327,376.5h3M328.5,375v3M362,367.5h3M363.5,366v3M360,373.5h3M361.5,372v3M370,400.5h3M371.5,399v3M342,397.5h3M343.5,396v3M402,341.5h3M403.5,340v3M377,351.5h3M378.5,350v3M431,367.5h3M432.5,366v3M459,348.5h3M460.5,347v3M442,397.5h3M443.5,396v3M381,440.5h3M382.5,439v3M360,456.5h3M361.5,455v3M369,465.5h3M370.5,464v3M424,421.5h3M425.5,420v3M419,453.5h3M420.5,452v3M461,410.5h3M462.5,409v3M469,447.5h3M470.5,446v3M471,462.5h3M472.5,461v3M397,419.5h3M398.5,418v3M400,411.5h3M401.5,410v3M364,323.5h3M365.5,322v3M335,360.5h3M336.5,359v3M353,365.5h3M354.5,364v3M425,314.5h3M426.5,313v3M579,385.5h3M580.5,384v3M517,403.5h3M518.5,402v3M691,441.5h3M692.5,440v3M641,350.5h3M642.5,349v3M661,356.5h3M662.5,355v3M669,383.5h3M670.5,382v3M636,386.5h3M637.5,385v3M671,393.5h3M672.5,392v3M576,455.5h3M577.5,454v3M564,469.5h3M565.5,468v3M495,470.5h3M496.5,469v3M544,436.5h3M545.5,435v3M539,444.5h3M540.5,443v3M687,354.5h3M688.5,353v3M717,430.5h3M718.5,429v3M753,407.5h3M754.5,406v3M773,350.5h3M774.5,349v3M803,352.5h3M804.5,351v3M824,329.5h3M825.5,328v3M687,354.5h3M688.5,353v3M727,357.5h3M728.5,356v3M744,383.5h3M745.5,382v3M760,360.5h3M761.5,359v3M735,341.5h3M736.5,340v3M802,426.5h3M803.5,425v3" stroke="#787878" stroke-width="1" fill="none" shape-rendering="crispEdges"/>
<path d="M120,60h1M115,66h1M63,81h1M98,118h1M100,136h1M67,138h1M60,162h1M75,167h1M84,170h1M83,173h1M145,72h1M157,68h1M138,94h1M150,90h1M189,76h1M127,95h1M184,151h1M155,157h1M153,169h1M138,185h1M130,192h1M76,209h1M217,107h1M217,112h1M205,114h1M232,120h1M254,129h1M203,156h1M220,70h1M103,160h1M274,73h1M316,63h1M292,104h1M318,100h1M331,152h1M274,135h1M273,189h1M342,165h1M360,176h1M375,125h1M385,129h1M393,128h1M412,114h1M406,101h1M418,70h1M428,92h1M485,65h1M385,170h1M375,183h1M388,184h1M474,194h1M301,211h1M610,65h1M590,120h1M647,118h1M533,169h1M540,182h1M543,174h1M591,173h1M602,208h1M736,93h1M738,102h1M769,87h1M803,74h1M828,82h1M742,158h1M758,160h1M830,177h1M816,143h1M742,185h1M766,136h1M648,118h1M729,210h1M76,209h1M92,225h1M103,248h1M128,289h1M135,294h1M130,192h1M186,279h1M215,315h1M238,331h1M265,331h1M236,240h1M230,251h1M153,289h1M168,307h1M68,259h1M89,270h1M205,215h1M258,244h1M295,215h1M300,211h1M330,254h1M346,289h1M352,283h1M385,282h1M382,241h1M392,232h1M388,226h1M403,210h1M323,319h1M445,254h1M466,255h1M470,294h1M452,287h1M365,323h1M474,194h1M602,208h1M610,247h1M560,268h1M524,257h1M628,211h1M676,219h1M702,232h1M694,255h1M504,296h1M729,210h1M733,233h1M713,269h1M675,219h1M701,232h1M739,284h1M829,267h1M826,329h1M713,317h1M729,322h1M108,358h1M123,374h1M130,377h1M140,374h1M155,404h1M178,396h1M196,373h1M187,419h1M206,422h1M191,455h1M127,408h1M132,419h1M238,331h1M244,344h1M265,331h1M264,395h1M227,458h1M252,458h1M176,340h1M257,420h1M258,390h1M54,408h1M58,447h1M323,320h1M330,351h1M328,376h1M363,367h1M361,373h1M371,400h1M343,397h1M403,341h1M378,351h1M432,367h1M460,348h1M443,397h1M382,440h1M361,456h1M370,465h1M425,421h1M420,453h1M462,410h1M470,447h1M472,462h1M398,419h1M401,411h1M365,323h1M336,360h1M354,365h1M426,314h1M580,385h1M518,403h1M692,441h1M642,350h1M662,356h1M670,383h1M637,386h1M672,393h1M577,455h1M565,469h1M496,470h1M545,436h1M540,444h1M688,354h1M718,430h1M754,407h1M774,350h1M804,352h1M825,329h1M688,354h1M728,357h1M745,383h1M761,360h1M736,341h1M803,426h1" stroke="#fff" stroke-width="1" fill="none" shape-rendering="crispEdges" transform="translate(0,0.5)"/>
<text x="148" y="84" fill="#e06010" font-size="11" textLength="16.1" lengthAdjust="spacingAndGlyphs">こと</text>
<text x="88.3" y="176" fill="#e06010" font-size="11" textLength="8.3" lengthAdjust="spacingAndGlyphs">や</text>
<text x="261" y="130" fill="#e06010" font-size="11" textLength="48.1" lengthAdjust="spacingAndGlyphs">ヘルクレス</text>
<text x="380.9" y="115" fill="#e06010" font-size="11" textLength="40.8" lengthAdjust="spacingAndGlyphs">かんむり</text>
<text x="464.7" y="115" fill="#e06010" font-size="11" textLength="35.6" lengthAdjust="spacingAndGlyphs">うしかい</text>
<text x="584.6" y="64.6" fill="#e06010" font-size="11" textLength="43.4" lengthAdjust="spacingAndGlyphs">りょうけん</text>
<text x="614.6" y="151" fill="#e06010" font-size="11" textLength="42.2" lengthAdjust="spacingAndGlyphs">かみのけ</text>
<text x="801.4" y="100.5" fill="#e06010" font-size="11" textLength="23.4" lengthAdjust="spacingAndGlyphs">こじし</text>
<text x="89.5" y="259.5" fill="#e06010" font-size="11" textLength="18.3" lengthAdjust="spacingAndGlyphs">わし</text>
<text x="194.7" y="296" fill="#e06010" font-size="11" textLength="43.3" lengthAdjust="spacingAndGlyphs">へび(尾)</text>
<text x="259.8" y="296" fill="#e06010" font-size="11" textLength="51.8" lengthAdjust="spacingAndGlyphs">へびつかい</text>
<text x="162" y="322.5" fill="#e06010" font-size="11" textLength="18.5" lengthAdjust="spacingAndGlyphs">たて</text>
<text x="384" y="218" fill="#e06010" font-size="11" textLength="41.5" lengthAdjust="spacingAndGlyphs">へび(頭)</text>
<text x="806" y="275.5" fill="#e06010" font-size="11" textLength="35.1" lengthAdjust="spacingAndGlyphs">ろくぶん</text>
<text x="644.7" y="364" fill="#e06010" font-size="11" textLength="28.3" lengthAdjust="spacingAndGlyphs">からす</text>
<text x="722.6" y="349" fill="#e06010" font-size="11" textLength="25.8" lengthAdjust="spacingAndGlyphs">コップ</text>
<text x="782.7" y="375" fill="#e06010" font-size="11" textLength="39.6" lengthAdjust="spacingAndGlyphs">うみへび</text>
<text x="827" y="453.5" fill="#e06010" font-size="11" textLength="28.8" lengthAdjust="spacingAndGlyphs">ポンプ</text>
<text x="433.4" y="478" fill="#e06010" font-size="11" textLength="37.1" lengthAdjust="spacingAndGlyphs">おおかみ</text>
<text x="791.9" y="194" fill="#e01020" font-size="11" textLength="14.9" lengthAdjust="spacingAndGlyphs">しし</text>
<text x="566.6" y="281" fill="#e01020" font-size="11" textLength="27.6" lengthAdjust="spacingAndGlyphs">おとめ</text>
<text x="419.7" y="343.5" fill="#e01020" font-size="11" textLength="39.6" lengthAdjust="spacingAndGlyphs">てんびん</text>
<text x="319.6" y="441.5" fill="#e01020" font-size="11" textLength="25.8" lengthAdjust="spacingAndGlyphs">さそり</text>
<text x="127.8" y="401" fill="#e01020" font-size="11" textLength="17.6" lengthAdjust="spacingAndGlyphs">いて</text>
<text transform="translate(155.4,76) scale(1.138,1)" dx="0 -2.8 0 -2.8" fill="#e0e020" font-size="11.5">ﾍﾞｶﾞ</text>
<text transform="translate(223.5,211.5) scale(1.218,1)" dx="0 0 0 0 0 0 -2.8" fill="#e0e020" font-size="11.5">ﾗｽｱﾙﾊｹﾞ</text>
<text transform="translate(482.3,178.5) scale(1.063,1)" dx="0 0 0 0 0 0 0" fill="#e0e020" font-size="11.5">ｱｰｸﾄｩﾙｽ</text>
<text transform="translate(676.3,201) scale(1.159,1)" dx="0 -2.8 0 0 -2.8 0" fill="#e0e020" font-size="11.5">ﾃﾞﾈﾎﾞﾗ</text>
<text transform="translate(52.1,231) scale(1.148,1)" dx="0 0 0 0 0" fill="#e0e020" font-size="11.5">ｱﾙﾀｲﾙ</text>
<text transform="translate(558.4,336.5) scale(1.084,1)" dx="0 0 -2.8 0" fill="#e0e020" font-size="11.5">ｽﾋﾟｶ</text>
<text transform="translate(812.3,215.5) scale(1.233,1)" dx="0 0 -2.8 0 0" fill="#e0e020" font-size="11.5">ﾚｸﾞﾙｽ</text>
<text transform="translate(314.6,415.5) scale(1.089,1)" dx="0 0 0 0 0" fill="#e0e020" font-size="11.5">ｱﾝﾀﾚｽ</text>
<text x="835" y="195" fill="#f0f030" font-size="10.5">1</text>
<text x="793" y="207.5" fill="#f0f030" font-size="10.5">8</text>
<text x="749.6" y="223" fill="#f0f030" font-size="10.5">15</text>
<text x="708" y="238.5" fill="#f0f030" font-size="10.5">22</text>
<text x="667" y="254.5" fill="#f0f030" font-size="10.5">29</text>
<text x="621" y="272.7" fill="#f0f030" font-size="10.5">11/5</text>
<text x="585.5" y="288.5" fill="#f0f030" font-size="10.5">12</text>
<text x="543.5" y="304.7" fill="#f0f030" font-size="10.5">19</text>
<text x="500" y="320.7" fill="#f0f030" font-size="10.5">26</text>
<text x="451.3" y="336.5" fill="#f0f030" font-size="10.5">12/3</text>
<text x="412" y="349" fill="#f0f030" font-size="10.5">10</text>
<text x="364.5" y="359.5" fill="#f0f030" font-size="10.5">17</text>
<text x="317" y="368.5" fill="#f0f030" font-size="10.5">24</text>
<text x="267.5" y="374.7" fill="#f0f030" font-size="10.5">31</text>
<circle cx="491.5" cy="340.5" r="6.2" fill="#c8c8a0"/>
<text x="479" y="359.5" fill="#c8c8a0" font-size="12">太陽</text>
<circle cx="554.3" cy="311.5" r="5.7" fill="#99cccc"/>
<text x="542" y="330.5" fill="#99cccc" font-size="12">水星</text>
<path d="M655.5,260 L656.6,264.7 L662.5,267.5 L656.6,270.3 L655.5,275 L654.4,270.3 L648.5,267.5 L654.4,264.7Z" fill="#f0f020"/><circle cx="655.5" cy="267.5" r="3.3" fill="#f0f020"/><path d="M655.5,260v15M648,267.5h15" stroke="#f0f020" stroke-width="1"/>
<text x="643.5" y="286.5" fill="#f0f020" font-size="12">金星</text>
<circle cx="631.6" cy="277.6" r="2.3" fill="#e0e050"/><circle cx="461.5" cy="341.5" r="2.3" fill="#e8e840"/>
<ellipse cx="68.6" cy="374.5" rx="8.6" ry="3.8" fill="#f0b060"/><ellipse cx="62" cy="374.5" rx="1" ry="1.7" fill="#000"/><ellipse cx="75.2" cy="374.5" rx="1" ry="1.7" fill="#000"/><ellipse cx="68.6" cy="374.5" rx="4.8" ry="4.6" fill="#f0b060"/><ellipse cx="68.6" cy="374.5" rx="2.8" ry="2.8" fill="#dd9c48"/>
<text x="56" y="390.5" fill="#f0b060" font-size="12">土星</text>
<circle cx="87" cy="382.5" r="3.1" fill="none" stroke="#c8c8c8" stroke-width="2.2"/>
<text x="68.6" y="397.7" fill="#c8c8c8" font-size="12">冥王星</text>
<circle cx="97.5" cy="380.5" r="6.3" fill="#f0e830"/><path d="M91.5,378.5h12M92,382.5h11" stroke="#e08828" stroke-width="1"/><path d="M95,378.5l2.5,-2.3l3,0l2.5,2.3l-2.5,2l-3,0z" fill="#e07820"/>
<text x="83.7" y="397.7" fill="#f0e830" font-size="12">木星</text>
<circle cx="134" cy="247" r="3.1" fill="none" stroke="#e09090" stroke-width="2.2"/>
<text x="117.6" y="261.5" fill="#e09090" font-size="12" textLength="31.6" lengthAdjust="spacingAndGlyphs">パラス</text>
<circle cx="455.5" cy="306.5" r="3.1" fill="none" stroke="#dd99dd" stroke-width="2.2"/>
<text x="441" y="320.5" fill="#dd99dd" font-size="12" textLength="27.8" lengthAdjust="spacingAndGlyphs">ジュノ</text>
<circle cx="800.4" cy="198.4" r="3.1" fill="none" stroke="#88dd88" stroke-width="2.2"/>
<text x="785" y="213.5" fill="#88dd88" font-size="12" textLength="30.4" lengthAdjust="spacingAndGlyphs">ベスタ</text>
</g>
</svg>
<div class="box" style="left:26px;top:514px;width:341px;height:95px"></div>
<div class="t g" style="left:38px;top:520px">緯度</div>
<div class="t " style="left:119px;top:520px">＋<b>&nbsp;</b><b>3</b><b>5</b><b style="width:3.5px">.</b><b>7</b><b style="width:5.5px">°</b></div>
<div class="t g" style="left:208px;top:520px">日の出</div>
<div class="t " style="left:288px;top:520px"><b>0</b><b>6</b>時<b>0</b><b>3</b>分</div>
<div class="t g" style="left:38px;top:534px">経度</div>
<div class="t " style="left:119px;top:534px">＋<b>1</b><b>3</b><b>9</b><b style="width:3.5px">.</b><b>8</b><b style="width:5.5px">°</b></div>
<div class="t g" style="left:208px;top:534px">日の入</div>
<div class="t " style="left:288px;top:534px"><b>1</b><b>6</b>時<b>4</b><b>6</b>分</div>
<div class="t g" style="left:38px;top:548px">空の状態</div>
<div class="t r" style="left:117px;top:548px">明るい</div>
<div class="t g" style="left:208px;top:548px">月の出</div>
<div class="t " style="left:288px;top:548px"><b>1</b><b>7</b>時<b>1</b><b>9</b>分</div>
<div class="t g" style="left:38px;top:562px">空が暗い時間帯</div>
<div class="t g" style="left:208px;top:562px">月の入</div>
<div class="t " style="left:288px;top:562px"><b>0</b><b>6</b>時<b>1</b><b>4</b>分</div>
<div class="t " style="left:71px;top:576.5px"><b>1</b><b>8</b>時<b>1</b><b>2</b>分～<b>0</b><b>4</b>時<b>3</b><b>7</b>分</div>
<div class="t g" style="left:208px;top:576.5px">月齢</div>
<div class="t " style="left:257px;top:576.5px"><b>1</b><b>5</b><b style="width:3.5px">.</b><b>7</b><b>(</b>十六夜月<b>)</b></div>
<div class="t y" style="left:38px;top:590px">表示方向</div>
<div class="t " style="left:119px;top:590px"><b>1</b><b>5</b><b>h</b><b>&nbsp;</b><b>0</b><b>2</b><b>m</b></div>
<div class="t " style="left:184px;top:590px"><b style="width:13px">±</b><b>0</b><b>0</b><b style="width:5.5px">°</b><b>0</b><b>0</b><b>′</b></div>
<div class="t " style="left:250.5px;top:590px"><b>1</b><b style="width:3.5px">.</b><b>3</b>倍</div>
<div class="box" style="left:382px;top:514px;width:469px;height:95px"></div>
<div class="t " style="left:409.5px;top:526.5px"><b>1</b>等星</div>
<div class="t " style="left:409.5px;top:543.35px"><b>2</b>等星</div>
<div class="t " style="left:409.5px;top:560.2px"><b>3</b>等星</div>
<div class="t " style="left:409.5px;top:577.05px"><b>4</b>等星</div>
<div class="t " style="left:465.5px;top:526.5px"><b>5</b>等星</div>
<div class="t " style="left:465.5px;top:543.35px"><b>6</b>等星</div>
<div class="t " style="left:539px;top:521.0px">太陽</div>
<div class="t " style="left:539px;top:537.85px">水星</div>
<div class="t " style="left:539px;top:554.7px">金星</div>
<div class="t " style="left:539px;top:571.55px">火星</div>
<div class="t " style="left:539px;top:588.4px">木星</div>
<div class="t " style="left:595px;top:521.0px">土星</div>
<div class="t " style="left:595px;top:537.85px">天王星</div>
<div class="t " style="left:595px;top:554.7px">海王星</div>
<div class="t " style="left:595px;top:571.55px">冥王星</div>
<div class="t k" style="left:595px;top:588.4px">エリス</div>
<div class="t k" style="left:678px;top:521.0px">ケレス</div>
<div class="t k" style="left:678px;top:537.85px">パラス</div>
<div class="t k" style="left:678px;top:554.7px">ジュノ</div>
<div class="t k" style="left:678px;top:571.55px">ベスタ</div>
<div class="t k" style="left:678px;top:588.4px">月</div>
<svg width="879" height="631" viewBox="0 0 879 631">
<circle cx="399.5" cy="534.6" r="2.7" fill="#b8b8b8"/><circle cx="399.5" cy="551.4" r="2.3" fill="#a8a8a8"/>
<path d="M398,568.5h3M399.5,567v3" stroke="#aaa" stroke-width="1"/><path d="M398.5,585.5h2M399.5,584.5v2" stroke="#999" stroke-width="1"/>
<rect x="455" y="534" width="1" height="1" fill="#aaa"/><rect x="455" y="551" width="1" height="1" fill="#888"/>
<circle cx="526.6" cy="527.4" r="6.4" fill="#c8c8a0"/>
<circle cx="526.6" cy="544.25" r="5.6" fill="#88c0c0"/>
<path d="M526.6,554.1 L527.8,558.5 L533.6,561.1 L527.8,563.7 L526.6,568.1 L525.4,563.7 L519.6,561.1 L525.4,558.5Z" fill="#f0f020"/><circle cx="526.6" cy="561.1" r="3.3" fill="#f0f020"/><path d="M526.6,554.1v14M519.6,561.1h14" stroke="#f0f020" stroke-width="1"/>
<circle cx="526.6" cy="577.9499999999999" r="5.6" fill="#dd2211"/>
<circle cx="526.6" cy="594.8" r="6.4" fill="#f0e830"/><path d="M520.6,592.8h12M521,596.8h11" stroke="#e08828" stroke-width="1"/><path d="M524,592.8l2.5,-2.3l3,0l2.5,2.3l-2.5,2l-3,0z" fill="#e07820"/>
<ellipse cx="582.4" cy="527.4" rx="9" ry="3.9" fill="#f0b060"/><ellipse cx="575.6" cy="527.4" rx="1" ry="1.7" fill="#000"/><ellipse cx="589.2" cy="527.4" rx="1" ry="1.7" fill="#000"/><ellipse cx="582.4" cy="527.4" rx="5" ry="4.8" fill="#f0b060"/><ellipse cx="582.4" cy="527.4" rx="3" ry="3" fill="#dd9c48"/>
<circle cx="582.4" cy="544.25" r="3.1" fill="none" stroke="#88c0c0" stroke-width="2.2"/>
<circle cx="582.4" cy="561.1" r="3.1" fill="none" stroke="#c8c8a0" stroke-width="2.2"/>
<circle cx="582.4" cy="577.9499999999999" r="3.1" fill="none" stroke="#c0c0c0" stroke-width="2.2"/>
<circle cx="582.4" cy="594.8" r="3" fill="none" stroke="#e04080" stroke-width="2"/><path d="M582.4,590.1999999999999v1M582.4,598.4v1M577.8,594.8h1M586.0,594.8h1M579.4,591.4h1M584.4,591.4h1M579.4,598.1999999999999h1M584.4,598.1999999999999h1" stroke="#e04080" stroke-width="1.4"/>
<circle cx="666.1" cy="527.4" r="3.1" fill="none" stroke="#9898f0" stroke-width="2.2"/>
<circle cx="666.1" cy="544.25" r="3.1" fill="none" stroke="#d89090" stroke-width="2.2"/>
<circle cx="666.1" cy="561.1" r="3.1" fill="none" stroke="#cc90cc" stroke-width="2.2"/>
<circle cx="666.1" cy="577.9499999999999" r="3.1" fill="none" stroke="#80c880" stroke-width="2.2"/>
<circle cx="666.5" cy="594.8" r="7.4" fill="#eeee44"/>
</svg>
</body></html>
